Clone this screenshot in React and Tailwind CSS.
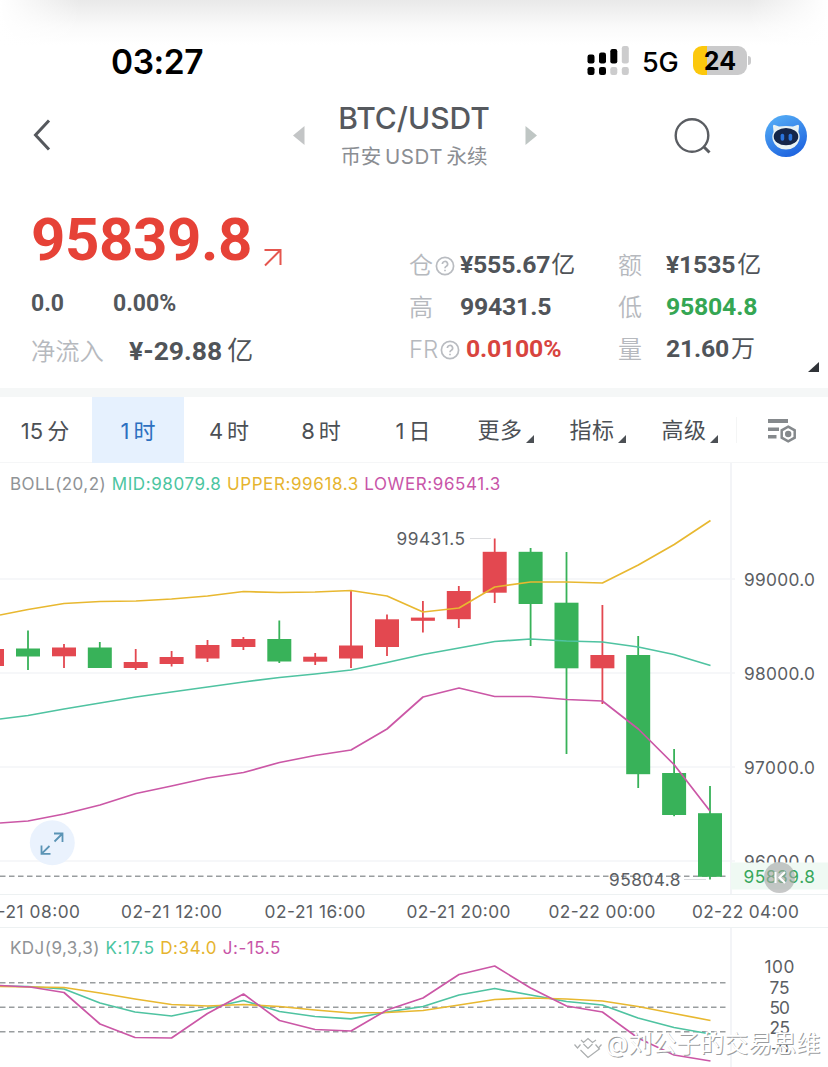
import React from "react";

const UI = "font-['Inter','Noto_Sans_CJK_SC',sans-serif]";
const NUM = "font-['Roboto','Noto_Sans_CJK_SC',sans-serif]";
const INTER = "Inter, 'Noto Sans CJK SC', sans-serif";
const RED = "#e34850";
const GREEN = "#38b259";
const TEAL = "#4fc3a1";
const GOLD = "#e8b830";
const PINK = "#cb57a6";
const LINE = "#f3f4f7";

// [x, body top, body bottom, wick top, wick bottom, rising]
const candles = [
  [-8, 649, 666, 649, 666, 1],
  [28, 648.5, 656.5, 630.5, 670, 0],
  [64, 647.5, 656.3, 644, 668, 1],
  [99.8, 647.5, 668, 642, 668, 0],
  [135.7, 662, 668, 649, 670, 1],
  [171.6, 657, 664, 651, 666.5, 1],
  [207.5, 645, 658.5, 640, 662, 1],
  [243.4, 639, 647, 637, 650, 1],
  [279.3, 639, 661.5, 620.5, 663, 0],
  [315.2, 656.7, 661.7, 653, 665, 1],
  [351, 645.5, 658.5, 590, 668, 1],
  [387, 619.3, 647, 614.5, 656, 1],
  [422.9, 617.6, 620.8, 601, 632.5, 1],
  [458.8, 591, 619.2, 586, 628, 1],
  [494.7, 551.8, 592.7, 538.5, 603, 1],
  [530.6, 551.8, 604, 548, 646, 0],
  [566.5, 602.7, 668.3, 552, 754, 0],
  [602.4, 655, 668.3, 605, 704, 1],
  [638.2, 655, 774.2, 636, 788, 0],
  [674.1, 773, 815, 749, 816.2, 0],
  [710, 813.2, 876.8, 786, 879.5, 0],
];

const upper = "0,615 28,609.5 64,603.5 100,601.5 136,601 171.5,599 207.5,596 243.5,591.5 279.5,592.5 315,592 351,590.5 387,596 423,612 459,608 494.7,587 530.6,582 566.5,582 602.4,583 638.3,565 674.2,544.5 710.5,520.5";
const mid = "0,719 28,715.5 64,709 100,703 136,697 171.5,692 207.5,687 243.5,682 279.5,677.5 315,674 351,670 387,662.5 423,654.5 459,648 494.7,641.5 530.6,639 566.5,641 602.4,642 638.3,647 674,654.5 710.5,665.5";
const lower = "0,823 28,821 64,814 100,805 136,793.5 171.5,786 207.5,778 243.5,772.5 279.5,762.5 315,755.5 351,750 387,729 423,697 459,688 494.7,696.5 530.6,696.5 566.5,699.5 602.4,701 638.3,729 674,764.5 710,811";
const kLine = "0,986 28,986.5 64,989 100,1003 135,1012 171.5,1016 207.5,1008.5 243.5,1000.5 279.5,1011.5 315,1016.5 351,1018.8 387,1012 423,1006.5 459,995 494.7,988.5 530.6,995 566.5,1001.5 602.4,1005 638,1018 674,1027.5 710.5,1034";
const dLine = "0,986.5 64,987.5 100,993 135,999 171.5,1004.5 207.5,1006 243.5,1004.5 279.5,1006.5 315,1010 351,1013 387,1012.5 423,1010.5 459,1005 494.7,999.5 530.6,998 566.5,999 602.4,1001 638,1006.5 674,1013.5 710.5,1020.5";
const jLine = "0,985.5 30,987 64,992.5 100,1024 135,1037.5 171.5,1038 207.5,1013.5 243.5,994 279.5,1020.5 315,1029.5 351,1031 387,1010 423,998 459,974.5 494.7,966 530.6,988 566.5,1006 602.4,1012 638,1038 674,1055 710.5,1061";

const dates = [
  [-25, 105, "02-21 08:00"],
  [121, 101, "02-21 12:00"],
  [264.5, 101, "02-21 16:00"],
  [406.5, 104, "02-21 20:00"],
  [548.5, 107, "02-22 00:00"],
  [692, 107, "02-22 04:00"],
];

function Label({ x, y, w, fill = "#5b5e63", size = 17.3, children }) {
  return (
    <text x={x} y={y} textLength={w} fontSize={size} fill={fill} fontFamily={INTER}>
      {children}
    </text>
  );
}

function Curve({ points, color }) {
  return <polyline points={points} fill="none" stroke={color} strokeWidth="1.7" strokeLinejoin="round" />;
}

function StatusBar() {
  return (
    <div className="relative flex h-[90px] items-start bg-linear-to-b from-[#e9e9e9] via-[#fafafa] via-30% to-white to-50% pt-[40px]">
      <div className="absolute top-0 left-0 h-[45px] w-[80px] bg-linear-to-r from-white to-white/0" />
      <div className="absolute top-0 right-0 h-[45px] w-[80px] bg-linear-to-l from-white to-white/0" />
      <div className="w-[474px] pl-[111px] text-[33.5px] leading-[44px] font-semibold tracking-[-0.45px] text-black">03:27</div>
      <svg className="ml-[112px] h-[44px] w-[46px] shrink-0" viewBox="586 40 46 44">
        <g fill="#000">
          <rect x="587.5" y="54.5" width="7" height="9" rx="2.2" />
          <rect x="599" y="52.5" width="7" height="11" rx="2.2" />
          <rect x="610.3" y="49" width="7" height="14.5" rx="2.2" />
          <rect x="587.5" y="67" width="7" height="8" rx="2.2" />
          <rect x="599" y="67" width="7" height="8" rx="2.2" />
        </g>
        <g fill="#cccccd">
          <rect x="621.8" y="46" width="7" height="17.5" rx="2.2" />
          <rect x="610.3" y="67" width="7" height="8" rx="2.2" />
          <rect x="621.8" y="67" width="7" height="8" rx="2.2" />
        </g>
      </svg>
      <div className="w-[61px] pl-[10px] text-[27px] leading-[45px] font-medium tracking-[-0.3px] text-black">5G</div>
      <div className="mt-[6px] flex h-[29px] w-[54px] items-center justify-center rounded-[9px] bg-linear-to-r from-[#fcc80d] from-26% to-[#cacacb] to-26% pt-[1px] text-[25px] leading-none font-bold text-black">
        24
      </div>
      <div className="mt-[16px] ml-[1px] h-[9px] w-[3px] rounded-r-full bg-[#cacacb]" />
    </div>
  );
}

function Robot() {
  return (
    <svg className="h-[44px] w-[44px]" viewBox="0 0 44 44">
      <defs>
        <linearGradient id="botBg" x1="0.2" y1="0" x2="0.7" y2="1">
          <stop offset="0" stopColor="#55aef6" />
          <stop offset="1" stopColor="#1d62df" />
        </linearGradient>
      </defs>
      <circle cx="22" cy="22" r="21" fill="url(#botBg)" />
      <path d="M9 12.500q-.2-2.300 1.800-1.500l4.200 1.600q7-1.300 14 0l4.200-1.600q2-.8 1.800 1.500l-.6 5.500q2.200 4 .7 8.500Q32 35.500 22 35.500T8.900 26.500q-1.500-4.500.7-8.500z" fill="#e9f3f4" />
      <ellipse cx="22" cy="22.700" rx="12.300" ry="8.600" fill="#14264a" />
      <rect x="16.600" y="19.800" width="3.600" height="7" rx="1.700" fill="#2b74dc" />
      <rect x="24.600" y="19.800" width="3.600" height="7" rx="1.700" fill="#2b74dc" />
    </svg>
  );
}

function Header() {
  return (
    <div className="flex h-[95px] items-start">
      <svg className="mt-[25px] ml-[30px] h-[40px] w-[24px]" viewBox="30 115 24 40">
        <path d="M49 120.500L35.500 135 49 149.500" fill="none" stroke="#55585d" strokeWidth="3" />
      </svg>
      <svg className="mt-[35px] ml-[238px] h-[20px] w-[14px]" viewBox="292 125 14 20">
        <path d="M293 135.500L304.500 126v19z" fill="#c3c5c6" />
      </svg>
      <div className="ml-[32px] flex w-[152px] flex-col items-center whitespace-nowrap">
        <div className="mt-[10px] text-[30px] leading-[36px] font-medium text-[#56595e]">BTC/USDT</div>
        <div className="mt-[7px] text-[20.500px] leading-[28px] text-[#8b8e93]">
          <span>币安</span>
          <span className="mx-[3.500px] tracking-[0.600px]">USDT</span>
          <span>永续</span>
        </div>
      </div>
      <svg className="mt-[35px] ml-[34px] h-[20px] w-[14px]" viewBox="524 125 14 20">
        <path d="M537 135.500L525.500 126v19z" fill="#bfc6c4" />
      </svg>
      <svg className="mt-[25px] ml-[134px] h-[42px] w-[42px]" viewBox="672 115 42 42">
        <circle cx="692" cy="135.500" r="16.300" fill="none" stroke="#5a5d62" strokeWidth="2.400" />
        <path d="M703.500 146.500L709.500 152.500" stroke="#5a5d62" strokeWidth="3" />
      </svg>
      <div className="mt-[24px] ml-[50px]">
        <Robot />
      </div>
    </div>
  );
}

function Help() {
  return (
    <svg className="h-[20px] w-[20px] shrink-0" viewBox="0 0 20 20" fill="none" stroke="#b9bcc1" strokeWidth="1.700">
      <circle cx="10" cy="10" r="8.600" />
      <path d="M7.400 8.100a2.600 2.600 0 1 1 3.900 2.200q-1.300.700-1.300 2M10 13.700v1.600" />
    </svg>
  );
}

function Stat({ label, help, wide, value, unit, color, gap }) {
  return (
    <div className="flex h-[42px] items-center whitespace-nowrap">
      <div className={wide}>
        <span>{label}</span>
        {help && <Help />}
      </div>
      <div className={`${NUM} text-[24.800px] leading-[30px] font-bold tracking-[-0.200px] ${color}`}>
        {value}
        {unit && <span className={`text-[24px] font-normal ${gap}`}>{unit}</span>}
      </div>
    </div>
  );
}

function Quote() {
  const left = "-ml-[1px] flex w-[51px] items-center gap-[2px] text-[24px] font-[350] text-[#b6b9be]";
  const right = "w-[48px] text-[24px] font-[350] text-[#b6b9be]";
  const dark = "-mt-[2px] text-[#505459]";
  return (
    <div className="flex h-[203px]">
      <div className="w-[410px] pl-[31px] whitespace-nowrap">
        <div className="mt-[19px] flex h-[72px] items-center">
          <div className={`${NUM} w-[230px] text-[60px] leading-[72px] font-bold tracking-[-0.400px] text-[#e64237]`}>95839.8</div>
          <svg className="mt-[33px] h-[22px] w-[22px]" viewBox="261 246 22 22">
            <path d="M264.500 250H280.500V265M280 250.500L265 265.500" fill="none" stroke="#e5564e" strokeWidth="2" />
          </svg>
        </div>
        <div className={`${NUM} mt-[13px] flex h-[30px] text-[23px] leading-[30px] font-bold text-[#53575c]`}>
          <div className="w-[82px]">0.0</div>
          <div>0.00%</div>
        </div>
        <div className="mt-[11px] flex h-[42px] items-center">
          <div className="w-[98px] text-[24.300px] font-[350] text-[#b6b9be]">净流入</div>
          <div className={`${NUM} text-[26.500px] font-bold text-[#505459]`}>
            ¥-29.88<span className="ml-[5px] text-[26px] font-normal">亿</span>
          </div>
        </div>
      </div>
      <div className="w-[208px] pt-[60px]">
        <Stat wide={left} label="仓" help value="¥555.67" unit="亿" gap="ml-[1px]" color={dark} />
        <Stat wide={left} label="高" value="99431.5" color={dark} />
        <Stat wide="-ml-[1px] -mt-[1px] flex w-[57px] items-center gap-[2px] text-[24px] font-[350] text-[#b6b9be]" label="FR" help value="0.0100%" color="-mt-[3px] text-[#d8443e]" />
      </div>
      <div className="w-[188px] pt-[60px]">
        <Stat wide={right} label="额" value="¥1535" unit="亿" gap="ml-[2px]" color={dark} />
        <Stat wide={right} label="低" value="95804.8" color="-mt-[2px] text-[#35a653]" />
        <Stat wide={right} label="量" value="21.60" unit="万" gap="ml-[2px]" color="-mt-[3px] text-[#505459]" />
      </div>
      <svg className="mt-[177px] ml-[2px] h-[10px] w-[11px]" viewBox="0 0 11 10">
        <path d="M0 10L11 0V10z" fill="#303338" />
      </svg>
    </div>
  );
}

function Tabs() {
  const plain = [["15", "分"], ["1", "时"], ["4", "时"], ["8", "时"], ["1", "日"]];
  return (
    <div className="flex h-[66px] border-b border-[#f5f6f7] text-[22px] text-[#4c5055]">
      {plain.map(([n, u], i) => (
        <div
          key={n + u}
          className={
            i === 1
              ? "flex h-[66px] w-[92px] shrink-0 items-center justify-center gap-[4px] bg-[#e6f1fe] pt-[2px] text-[#2d70c0]"
              : "flex h-[66px] w-[92px] shrink-0 items-center justify-center gap-[4px] pt-[2px] pr-[2px]"
          }
        >
          <span>{n}</span>
          <span>{u}</span>
        </div>
      ))}
      {["更多", "指标", "高级"].map((t) => (
        <div key={t} className="flex h-[66px] w-[92px] shrink-0 items-center justify-center gap-[3px] pt-[1px] pr-[1px]">
          <span className="tracking-[0.500px]">{t}</span>
          <svg className="mt-[16px] h-[8px] w-[8px]" viewBox="0 0 8 8">
            <path d="M0 8L8 0V8z" fill="#4c5055" />
          </svg>
        </div>
      ))}
      <div className="mt-[20px] h-[26px] w-px bg-[#f4f5f5]" />
      <svg className="mt-[19px] ml-[30px] h-[28px] w-[32px]" viewBox="767 416 32 28">
        <g fill="#85898c">
          <rect x="768" y="419" width="20" height="4" />
          <rect x="768" y="427.500" width="11" height="3.500" />
          <rect x="768" y="435" width="8.500" height="3.500" />
          <circle cx="788.200" cy="434" r="3.200" />
        </g>
        <path d="M788.200 426.700L794.700 430.300V437.700L788.200 441.300L781.700 437.700V430.300Z" fill="none" stroke="#85898c" strokeWidth="2.500" />
      </svg>
    </div>
  );
}

function PriceChart() {
  return (
    <div className="relative h-[431px]">
      <svg className="block h-[431px] w-[828px]" viewBox="0 463 828 431">
        <g stroke={LINE} strokeWidth="1.300">
          {[579, 673, 767, 861].map((y) => (
            <path key={y} d={`M0 ${y}H735`} />
          ))}
          <path d="M731 463V894" strokeWidth="2" />
        </g>
        <path d="M0 876.300H728" stroke="#999d9f" strokeWidth="1.400" strokeDasharray="5.500 3.500" />
        {candles.map(([x, t, b, wt, wb, up]) => (
          <g key={x} fill={up ? RED : GREEN}>
            <rect x={x - 0.9} y={wt} width="1.800" height={wb - wt} />
            <rect x={x - 12} y={t} width="24" height={b - t} />
          </g>
        ))}
        <Curve points={upper} color={GOLD} />
        <Curve points={mid} color={TEAL} />
        <Curve points={lower} color={PINK} />
        <path d="M470 538.500H491M684 879.500H706" stroke="#dcdde0" strokeWidth="1.200" />
        <Label x={396.500} y={545} w={68.500}>99431.5</Label>
        <Label x={609} y={886} w={71.500}>95804.8</Label>
        <Label x={744} y={585.500} w={71}>99000.0</Label>
        <Label x={744} y={679.500} w={71}>98000.0</Label>
        <Label x={744} y={773.500} w={71}>97000.0</Label>
        <Label x={744} y={867.500} w={71}>96000.0</Label>
        <rect x="731" y="862.500" width="97" height="27" fill="#eff9f3" />
        <Label x={743.500} y={883} w={71.500} fill="#38a75b">95839.8</Label>
        <circle cx="779.500" cy="877.500" r="15.500" fill="#a5a7a7" fillOpacity="0.620" />
        <path d="M775.500 872V883M785 872L779.500 877.500L785 883" fill="none" stroke="#fff" strokeWidth="2" />
        <circle cx="52.300" cy="842.800" r="22.500" fill="#eaf2fd" />
        <path d="M54 833.500H62.500V842M62 834L54.500 841.500M41.500 845.500V853.800H50.500M42 853.300L49.500 846" fill="none" stroke="#5b94b5" strokeWidth="1.800" />
      </svg>
      <div className="absolute top-[11px] left-[10px] flex gap-[5.500px] text-[17px] leading-[21px] tracking-[0.600px] whitespace-nowrap text-[#909396]">
        <span className="tracking-[0.450px]">BOLL(20,2)</span>
        <span className="text-[#4bc5a1]">MID:98079.8</span>
        <span className="text-[#e6b42f]">UPPER:99618.3</span>
        <span className="text-[#c855a8]">LOWER:96541.3</span>
      </div>
    </div>
  );
}

function DateAxis() {
  return (
    <svg className="block h-[34px] w-[828px]" viewBox="0 894 828 34">
      <path d="M0 894.500H828M0 927.500H828" stroke="#edf1f2" strokeWidth="1.200" />
      {dates.map(([x, w, t]) => (
        <Label key={t} x={x} y={918} w={w}>{t}</Label>
      ))}
    </svg>
  );
}

function KdjChart() {
  return (
    <div className="relative h-[139px] overflow-hidden">
      <svg className="block h-[139px] w-[828px]" viewBox="0 928 828 139">
        <path d="M731 928V1067" stroke={LINE} strokeWidth="2" />
        <path d="M0 982.700H728M0 1007.300H728M0 1031.700H728" stroke="#999d9f" strokeWidth="1.400" strokeDasharray="5.500 3.500" />
        <Curve points={kLine} color={TEAL} />
        <Curve points={dLine} color={GOLD} />
        <Curve points={jLine} color={PINK} />
        <Label x={764.500} y={973} w={30}>100</Label>
        <Label x={769.500} y={993.500} w={20}>75</Label>
        <Label x={769.500} y={1014} w={20.500}>50</Label>
        <Label x={769.500} y={1034} w={20.500}>25</Label>
        <Label x={771} y={1054.500} w={18}>-0</Label>
        <path d="M581 1040L588 1033.500 595 1040 592 1043 588 1039.500 584 1043ZM574.500 1045L577.500 1042 580.500 1045 577.500 1048ZM595.500 1045L598.500 1042 601.500 1045 598.500 1048ZM584 1045L588 1041.500 592 1045 588 1048.500ZM581 1050L584 1047.500 588 1051 592 1047.500 600 1049 588 1058Z" fill="#fff" />
        <path d="M581 1040L583.500 1042.500 588 1038.500 592.500 1042.500 596 1040M574.500 1044.500L577.500 1048 580.500 1044.500M595.500 1044.500L598.500 1048 601.500 1044.500M583.500 1044L588 1048.500 592.500 1044M580.500 1050L588 1057.500 600 1048.500" fill="none" stroke="#abaeaf" strokeWidth="1.200" />
      </svg>
      <div className="absolute top-[10px] left-[10px] flex gap-[5.500px] text-[17px] leading-[21px] tracking-[0.600px] whitespace-nowrap text-[#909396]">
        <span className="tracking-[0.450px]">KDJ(9,3,3)</span>
        <span className="text-[#4bc5a1]">K:17.5</span>
        <span className="text-[#e6b42f]">D:34.0</span>
        <span className="tracking-[0.600px] text-[#c855a8]">J:-15.5</span>
      </div>
      <div className="absolute top-[100px] left-[605px] text-[24px] leading-[32px] whitespace-nowrap text-white [text-shadow:1px_1px_0.5px_#9a9c9e]">
        @刘公子的交易思维
      </div>
    </div>
  );
}

export default function App() {
  return (
    <div className={`${UI} h-[1067px] w-[828px] overflow-hidden bg-white`}>
      <StatusBar />
      <Header />
      <Quote />
      <div className="h-[9px] bg-[#f5f7f7]" />
      <Tabs />
      <PriceChart />
      <DateAxis />
      <KdjChart />
    </div>
  );
}
